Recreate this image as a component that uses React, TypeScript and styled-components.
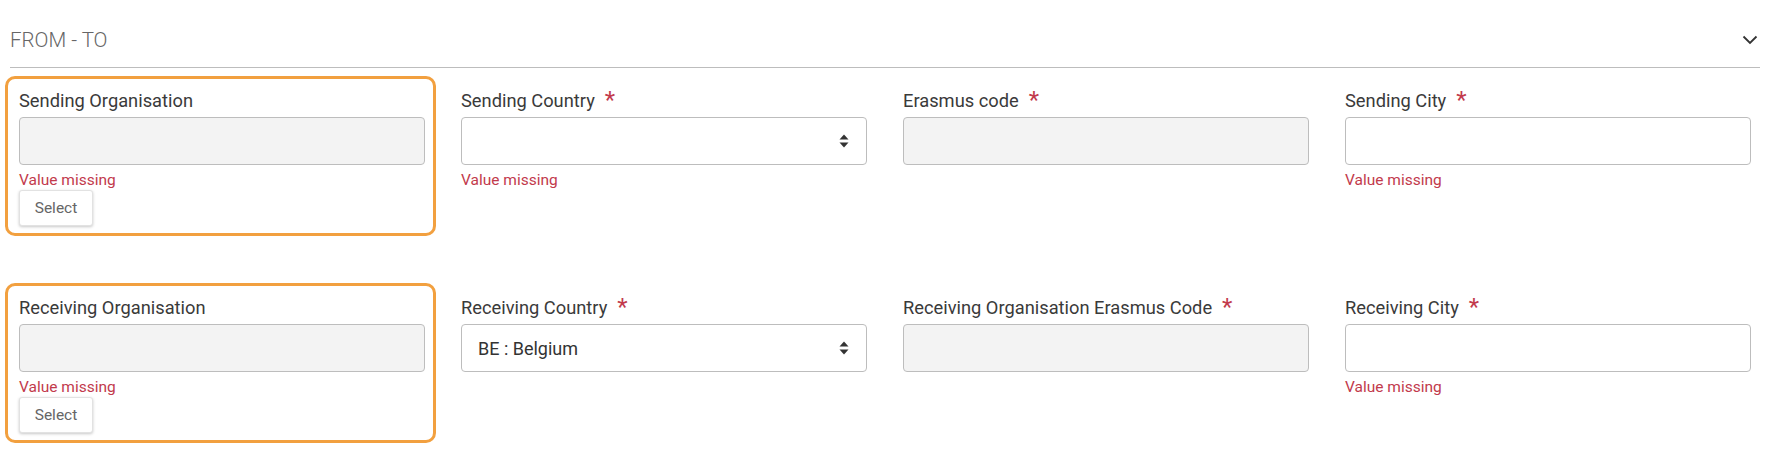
import { FC } from "react";
import styled, { createGlobalStyle } from "styled-components";

const GlobalStyle = createGlobalStyle`
  body {
    margin: 0;
    background: #fff;
    font-family: Roboto, "Liberation Sans", Arial, sans-serif;
  }
`;

const Page = styled.div`
  padding: 0 12px 0 5px;
`;

const Header = styled.div`
  display: flex;
  align-items: center;
  justify-content: space-between;
  height: 68px;
  margin-left: 5px;
  border-bottom: 1px solid #bdbdbd;
  box-sizing: border-box;
  padding-top: 12px;
`;

const HeaderTitle = styled.span`
  font-size: 20.5px;
  font-weight: 300;
  color: #666;
`;

const Chevron = styled.svg`
  width: 16px;
  height: 10px;
  margin-right: 2px;
`;

const Row = styled.div<{ $top: number }>`
  display: grid;
  grid-template-columns: repeat(4, 431px);
  column-gap: 11px;
  align-items: start;
  margin-top: ${(p) => p.$top}px;
`;

const Cell = styled.div<{ $highlight?: boolean }>`
  border: 3px solid ${(p) => (p.$highlight ? "#f2a03f" : "transparent")};
  border-radius: 10px;
  padding: 11px 8px 7px 11px;
`;

const Label = styled.div`
  display: flex;
  align-items: flex-start;
  font-size: 18.3px;
  line-height: 22px;
  color: #3a3a3a;
  margin-bottom: 5px;
`;

const Star = styled.span`
  color: #c23a4c;
  font-size: 24px;
  line-height: 20px;
  margin-left: 10px;
`;

const Field = styled.div<{ $disabled?: boolean }>`
  position: relative;
  display: flex;
  align-items: center;
  height: 48px;
  box-sizing: border-box;
  border: 1px solid #bdbdbd;
  border-radius: 4px;
  background: ${(p) => (p.$disabled ? "#f3f3f3" : "#fff")};
  padding: 0 16px;
  font-size: 18px;
  color: #333;
`;

const SortIcon = styled.svg`
  position: absolute;
  right: 17px;
  top: 50%;
  width: 10px;
  height: 14px;
  margin-top: -7px;
`;

const Error = styled.div`
  font-size: 15.5px;
  line-height: 18px;
  color: #c23a4c;
  margin-top: 6px;
`;

const SelectButton = styled.button`
  display: block;
  margin-top: 1px;
  width: 74px;
  height: 36px;
  border: 1px solid #e2e2e2;
  border-radius: 3px;
  background: #fff;
  box-shadow: 0 1px 3px rgba(0, 0, 0, 0.22);
  font-family: inherit;
  font-size: 15.5px;
  color: #666;
  padding: 0;
`;

type FieldDef = {
  label: string;
  required?: boolean;
  disabled?: boolean;
  select?: boolean;
  value?: string;
  error?: boolean;
  org?: boolean;
};

const Sort: FC = () => (
  <SortIcon viewBox="0 0 10 14">
    <path d="M5 0.5 L9.5 5.5 H0.5 Z" fill="#333" />
    <path d="M5 13.5 L9.5 8.5 H0.5 Z" fill="#333" />
  </SortIcon>
);

const FormField: FC<FieldDef> = ({ label, required, disabled, select, value, error, org }) => (
  <Cell $highlight={org}>
    <Label>
      {label}
      {required && <Star>*</Star>}
    </Label>
    <Field $disabled={disabled}>
      {value}
      {select && <Sort />}
    </Field>
    {error && <Error>Value missing</Error>}
    {org && <SelectButton>Select</SelectButton>}
  </Cell>
);

const rows: FieldDef[][] = [
  [
    { label: "Sending Organisation", disabled: true, error: true, org: true },
    { label: "Sending Country", required: true, select: true, error: true },
    { label: "Erasmus code", required: true, disabled: true },
    { label: "Sending City", required: true, error: true },
  ],
  [
    { label: "Receiving Organisation", disabled: true, error: true, org: true },
    { label: "Receiving Country", required: true, select: true, value: "BE : Belgium" },
    { label: "Receiving Organisation Erasmus Code", required: true, disabled: true },
    { label: "Receiving City", required: true, error: true },
  ],
];

const App: FC = () => (
  <>
    <GlobalStyle />
    <Page>
      <Header>
        <HeaderTitle>FROM - TO</HeaderTitle>
        <Chevron viewBox="0 0 16 10">
          <polyline points="1.5,1.5 8,8 14.5,1.5" fill="none" stroke="#333" strokeWidth="1.8" />
        </Chevron>
      </Header>
      {rows.map((row, i) => (
        <Row key={i} $top={i === 0 ? 8 : 47}>
          {row.map((f) => (
            <FormField key={f.label} {...f} />
          ))}
        </Row>
      ))}
    </Page>
  </>
);

export default App;
